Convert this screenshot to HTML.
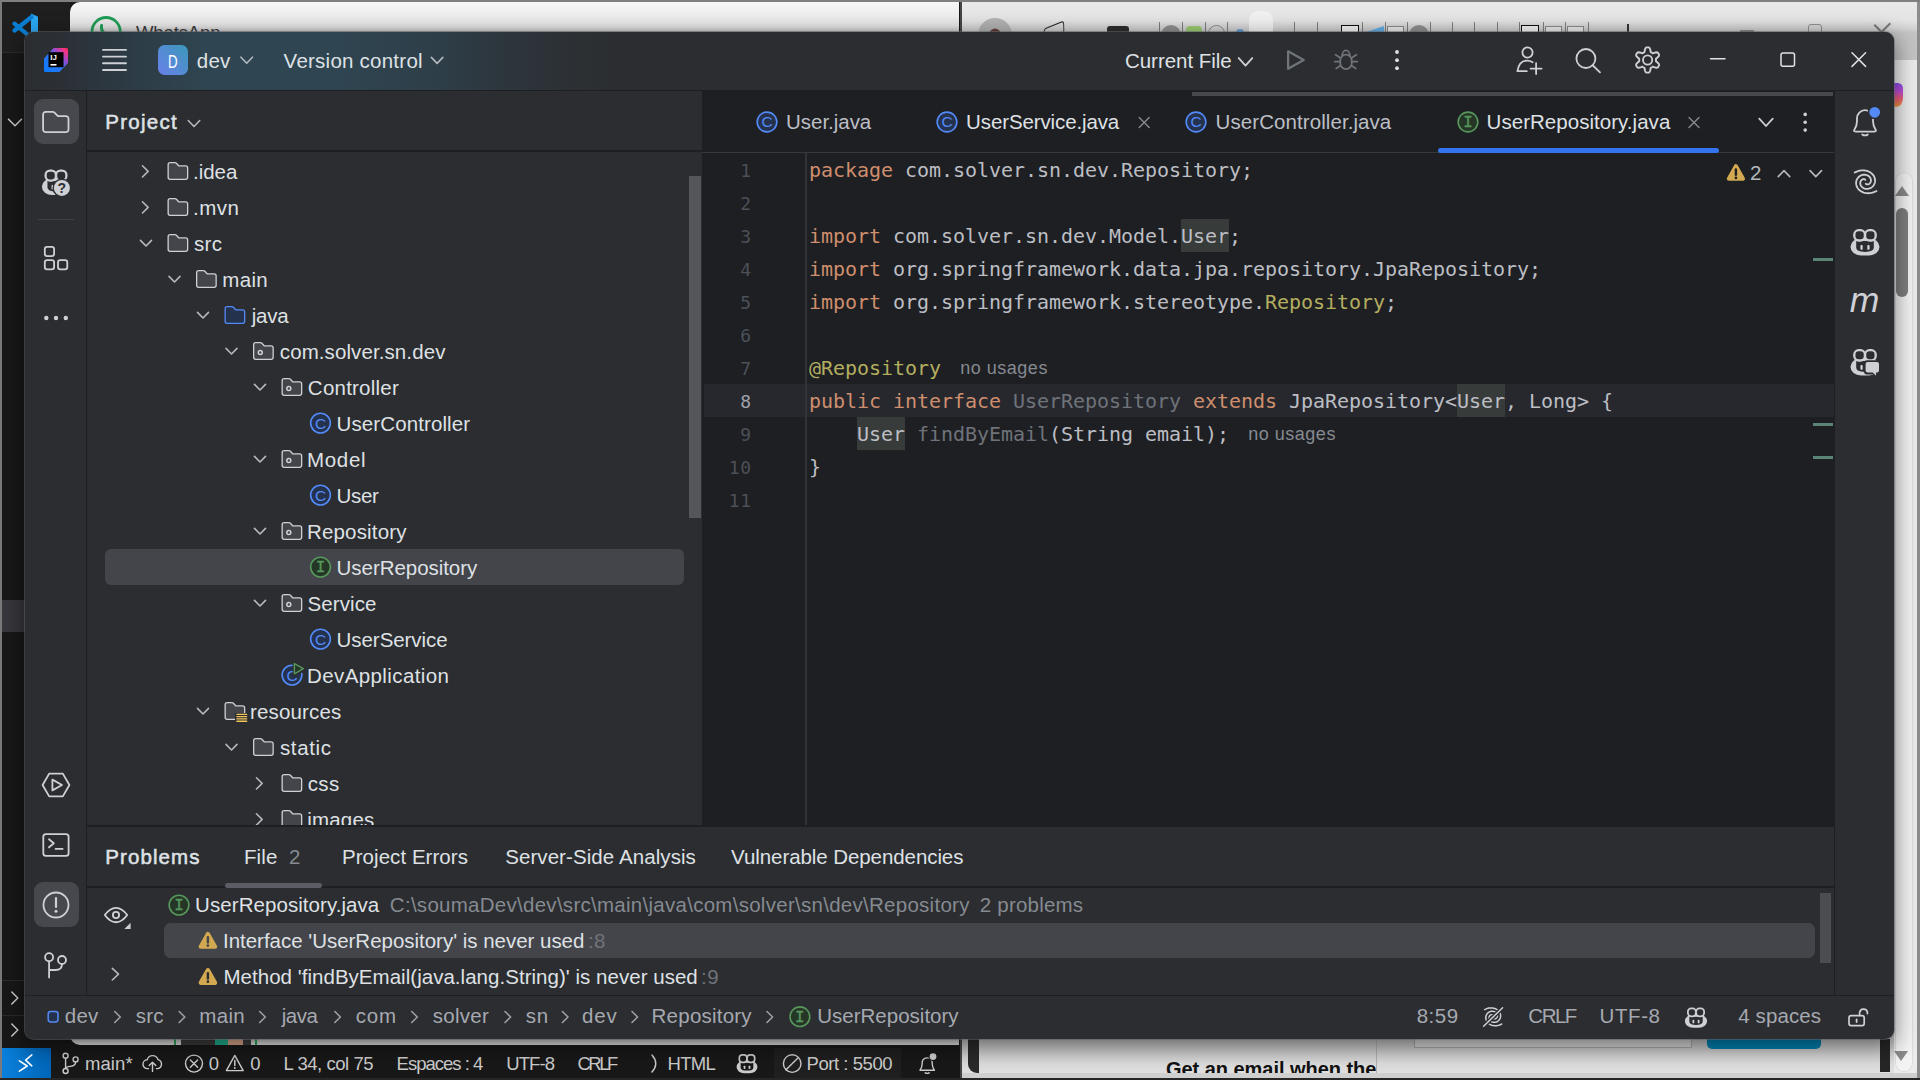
<!DOCTYPE html>
<html lang="en"><head><meta charset="utf-8"><title>dev – UserRepository.java</title>
<style>
html,body{margin:0;padding:0;background:#181818;overflow:hidden}
#root{position:relative;width:1920px;height:1080px;overflow:hidden;background:#181818;font-family:"Liberation Sans", sans-serif}
#root div,#root svg,#root span.t{position:absolute;display:block}
#root span.t{white-space:pre;height:30px}
</style></head><body><div id="root">
<div style="left:0px;top:0px;width:1920px;height:1080px;background:#181818;"></div>
<div style="left:2px;top:2px;width:68px;height:50px;background:#1f1f1f;"></div>
<div style="left:2px;top:52px;width:68px;height:1px;background:#2b2b2b;"></div>
<div style="left:2px;top:600px;width:24px;height:32px;background:#37373d;"></div>
<div style="left:2px;top:980px;width:24px;height:1px;background:#2b2b2b;"></div>
<div style="left:2px;top:1015px;width:24px;height:1px;background:#2b2b2b;"></div>
<div style="left:70px;top:2px;width:889px;height:1043px;border-radius:10px 0 0 10px;background:linear-gradient(180deg,#f7f7f7 0,#efefef 12px,#e6e6e6 24px,#d2d2d2 28px,#b8b8b8 31px,#bdbdbd 1036px,#e4e4e4 1043px)"></div>
<div style="left:962px;top:2px;width:958px;height:1076px;background:linear-gradient(180deg,#e9e9e9 0,#e4e4e4 18px,#d2d2d2 27px,#c4c4c4 31px,#c0c0c0 1038px,#c9c9c9 1046px,#dcdcdc 1062px,#e2e2e2 1076px)"></div>
<div style="left:959.5px;top:2px;width:2.5px;height:1076px;background:#454545;"></div>
<div style="left:1249px;top:11px;width:24px;height:24px;border-radius:9px 9px 0 0;background:#f1f1f1"></div>
<div style="left:978px;top:18px;width:34px;height:34px;border-radius:50%;background:radial-gradient(ellipse 8px 11px at 50% 62%,#5e3b31 0,#5e3b31 88%,#b2b2b2 100%)"></div>
<div style="left:1107px;top:26px;width:22px;height:8px;background:#2d2d2d;border-radius:3px 3px 0 0"></div>
<div style="left:1043px;top:25px;width:22px;height:12px;border:1.6px solid #333;border-radius:3px;transform:rotate(-22deg) skewX(-20deg);box-sizing:border-box"></div>
<div style="left:1159px;top:22px;width:1px;height:10px;background:#7d7d7d;"></div>
<div style="left:1182px;top:22px;width:1px;height:10px;background:#7d7d7d;"></div>
<div style="left:1205px;top:22px;width:1px;height:10px;background:#7d7d7d;"></div>
<div style="left:1227px;top:22px;width:1px;height:10px;background:#7d7d7d;"></div>
<div style="left:1294px;top:22px;width:1px;height:10px;background:#7d7d7d;"></div>
<div style="left:1317px;top:22px;width:1px;height:10px;background:#7d7d7d;"></div>
<div style="left:1362px;top:22px;width:1px;height:10px;background:#7d7d7d;"></div>
<div style="left:1385px;top:22px;width:1px;height:10px;background:#7d7d7d;"></div>
<div style="left:1407px;top:22px;width:1px;height:10px;background:#7d7d7d;"></div>
<div style="left:1430px;top:22px;width:1px;height:10px;background:#7d7d7d;"></div>
<div style="left:1452px;top:22px;width:1px;height:10px;background:#7d7d7d;"></div>
<div style="left:1474px;top:22px;width:1px;height:10px;background:#7d7d7d;"></div>
<div style="left:1497px;top:22px;width:1px;height:10px;background:#7d7d7d;"></div>
<div style="left:1519px;top:22px;width:1px;height:10px;background:#7d7d7d;"></div>
<div style="left:1543px;top:22px;width:1px;height:10px;background:#7d7d7d;"></div>
<div style="left:1565px;top:22px;width:1px;height:10px;background:#7d7d7d;"></div>
<div style="left:1588px;top:22px;width:1px;height:10px;background:#7d7d7d;"></div>
<div style="left:1161px;top:25px;width:20px;height:20px;border-radius:50%;background:#8f8f8f"></div>
<div style="left:1186px;top:26px;width:16px;height:8px;background:#9ccc72;border-radius:4px 4px 0 0"></div>
<div style="left:1208px;top:25px;width:17px;height:17px;border-radius:50%;border:1.5px solid #8a8a8a;box-sizing:border-box"></div>
<div style="left:1236px;top:29px;width:8px;height:8px;border-radius:50%;background:#5b9bd8"></div>
<div style="left:1409px;top:25px;width:20px;height:20px;border-radius:50%;background:#8f8f8f"></div>
<div style="left:1341px;top:25px;width:18px;height:8px;background:#f4f4f4;border:1.5px solid #111;box-sizing:border-box"></div>
<div style="left:1521px;top:25px;width:18px;height:8px;background:#f4f4f4;border:1.5px solid #111;box-sizing:border-box"></div>
<div style="left:1387px;top:26px;width:17px;height:7px;background:#e9e9e9;border:1px solid #8a8a8a;box-sizing:border-box"></div>
<div style="left:1545px;top:26px;width:17px;height:7px;background:#e9e9e9;border:1px solid #8a8a8a;box-sizing:border-box"></div>
<div style="left:1567px;top:26px;width:17px;height:7px;background:#e9e9e9;border:1px solid #8a8a8a;box-sizing:border-box"></div>
<div style="left:1363px;top:26px;width:0;height:0;border-left:21px solid transparent;border-bottom:7px solid #62aee8"></div>
<div style="left:1627px;top:24px;width:1.5px;height:8px;background:#333;"></div>
<div style="left:1740px;top:30px;width:14px;height:2px;background:#8a8a8a;"></div>
<div style="left:1808px;top:24px;width:14px;height:12px;background:transparent;border:1.5px solid #8f8f8f;border-radius:3px;box-sizing:border-box"></div>
<div style="left:1875px;top:24px;width:20px;height:1.5px;background:#777;transform:rotate(45deg);transform-origin:0 0"></div>
<div style="left:1891px;top:24px;width:20px;height:1.5px;background:#777;transform:rotate(135deg);transform-origin:0 0"></div>
<div style="left:1894px;top:60px;width:23px;height:1018px;background:#ebebeb;"></div>
<div style="left:1892px;top:83px;width:11px;height:24px;border-radius:3px 9px 11px 8px / 3px 9px 16px 10px;background:linear-gradient(180deg,#8a4df0 0,#c04fd8 35%,#f0607a 65%,#f59a3a 100%)"></div>
<div style="left:1895px;top:172px;width:18px;height:900px;border-radius:9px;background:#f3f3f3;box-shadow:inset 0 0 0 1px #dcdcdc"></div>
<div style="left:1895px;top:186px;width:0;height:0;border-left:7px solid transparent;border-right:7px solid transparent;border-bottom:10px solid #8a8a8a"></div>
<div style="left:1896px;top:208px;width:12px;height:89px;border-radius:6px;background:#7f7f7f"></div>
<div style="left:1894px;top:1051px;width:0;height:0;border-left:7.5px solid transparent;border-right:7.5px solid transparent;border-top:10px solid #8a8a8a"></div>
<div style="left:1917px;top:2px;width:3px;height:1076px;background:#8c8c8c;"></div>
<div style="left:1414px;top:1030px;width:278px;height:18px;background:#d4d4d4;border:1px solid #a6a6a6;box-sizing:border-box"></div>
<div style="left:1707px;top:1030px;width:114px;height:19px;background:#007fae;border-radius:0 0 5px 5px"></div>
<div style="left:1376px;top:1039px;width:1px;height:34px;background:#b0b0b0;"></div>
<div style="left:1880px;top:1039px;width:10px;height:33px;background:#262626;"></div>
<div style="left:968px;top:1030px;width:11px;height:43px;border-radius:0 0 0 9px;background:#2a2a2a"></div>
<div style="left:962px;top:1073px;width:955px;height:5px;background:#cfcfcf;"></div>
<div style="left:181px;top:1039px;width:70px;height:6px;background:#3b3b3b;"></div>
<div style="left:174px;top:1039px;width:2px;height:6px;background:#2ea35a;"></div>
<div style="left:255px;top:1039px;width:2px;height:6px;background:#2ea35a;"></div>
<div style="left:215px;top:1039px;width:13px;height:6px;background:#1fae8f;"></div>
<div style="left:228px;top:1039px;width:15px;height:6px;background:#d9a48a;"></div>
<div style="left:2px;top:1048px;width:957px;height:30px;background:#181818;"></div>
<div style="left:2px;top:1048px;width:49px;height:30px;background:linear-gradient(90deg,#0a80dc,#0066b8);"></div>
<div style="left:774px;top:1048px;width:127px;height:30px;background:#1f1f1f;"></div>
<div style="left:0px;top:0px;width:1920px;height:2px;background:#808080;"></div>
<div style="left:0px;top:0px;width:2px;height:1080px;background:#7a7a7a;"></div>
<div style="left:0px;top:1078px;width:1920px;height:2px;background:#262626;"></div>
<svg style="left:0;top:0" width="1920" height="1080" viewBox="0 0 1920 1080" fill="none"><path d="M31,13.5 L38,16.8 V45 L31,48 Z" fill="#2aa8f2"/><path d="M31.5,17 L14.5,30.5 M14.5,23.6 L31.5,38" stroke="#0b7fd4" stroke-width="4.2" fill="none" stroke-linecap="round" stroke-linejoin="round" /><path d="M8.5,119.25 L15,125.75 L21.5,119.25" stroke="#cccccc" stroke-width="1.6" fill="none" stroke-linecap="round" stroke-linejoin="round" /><path d="M11.8,992.0 L17.8,998 L11.8,1004.0" stroke="#cccccc" stroke-width="1.6" fill="none" stroke-linecap="round" stroke-linejoin="round" /><path d="M11.8,1024.0 L17.8,1030 L11.8,1036.0" stroke="#cccccc" stroke-width="1.6" fill="none" stroke-linecap="round" stroke-linejoin="round" /><circle cx="106.1" cy="31.6" r="14.1" stroke="#1f9d55" stroke-width="2.8" fill="none"/><path d="M101.6,25.5 q-1,5 3.4,8.5" stroke="#1f9d55" stroke-width="3" fill="none" stroke-linecap="round" stroke-linejoin="round" /><path d="M19.4,1060.8 L27.2,1066 L19.4,1071.2 M31.8,1054.8 L25.6,1060.2 L31.8,1065.8" stroke="#ffffff" stroke-width="1.6" fill="none" stroke-linecap="round" stroke-linejoin="round" /><circle cx="65.6" cy="1055.8" r="2.5" stroke="#cccccc" stroke-width="1.4" fill="none"/><circle cx="65.6" cy="1071" r="2.5" stroke="#cccccc" stroke-width="1.4" fill="none"/><circle cx="75.6" cy="1059.4" r="2.5" stroke="#cccccc" stroke-width="1.4" fill="none"/><path d="M65.6,1058.4 V1068.4 M75.6,1062 Q75.6,1066 70.5,1066.4 Q65.8,1066.8 65.6,1068.4" stroke="#cccccc" stroke-width="1.4" fill="none" stroke-linecap="round" stroke-linejoin="round" /><path d="M148.6,1068.6 H147.6 A4.4,4.4 0 0 1 147.2,1059.8 A5.6,5.6 0 0 1 158,1059.6 A4.6,4.6 0 0 1 157.6,1068.6 H156.4" stroke="#cccccc" stroke-width="1.4" fill="none" stroke-linecap="round" stroke-linejoin="round" /><path d="M152.5,1071.4 V1062.4 M149.2,1065.4 L152.5,1062.2 L155.8,1065.4" stroke="#cccccc" stroke-width="1.4" fill="none" stroke-linecap="round" stroke-linejoin="round" /><circle cx="194" cy="1063.6" r="8.5" stroke="#cccccc" stroke-width="1.4" fill="none"/><path d="M190.4,1060 L197.6,1067.2 M197.6,1060 L190.4,1067.2" stroke="#cccccc" stroke-width="1.4" fill="none" stroke-linecap="round" stroke-linejoin="round" /><path d="M234.8,1055.4 L243.2,1070.6 H226.4 Z" stroke="#cccccc" stroke-width="1.4" fill="none" stroke-linecap="round" stroke-linejoin="round" /><path d="M234.8,1060.6 V1065.6" stroke="#cccccc" stroke-width="1.5" fill="none" stroke-linecap="round" stroke-linejoin="round" /><circle cx="234.8" cy="1068" r="0.9" stroke="none" stroke-width="0" fill="#cccccc"/><path d="M652,1055 Q659.5,1063.5 652,1072" stroke="#cccccc" stroke-width="1.5" fill="none" stroke-linecap="round" stroke-linejoin="round" /><rect x="736.56" y="1060.78" width="20.88" height="12.38" rx="7.56" ry="6.05" fill="#cccccc"/><path d="M740.66,1062.72 h12.67 v4.68 q0,3.17 -6.34,3.17 q-6.34,0 -6.34,-3.17 Z" fill="#181818"/><rect x="739.3" y="1054.94" width="7.63" height="7.42" rx="3.17" fill="#181818" stroke="#cccccc" stroke-width="1.66"/><rect x="747.07" y="1054.94" width="7.63" height="7.42" rx="3.17" fill="#181818" stroke="#cccccc" stroke-width="1.66"/><rect x="743.69" y="1065.6699999999998" width="1.66" height="3.31" rx="0.58" fill="#cccccc"/><rect x="748.66" y="1065.6699999999998" width="1.66" height="3.31" rx="0.58" fill="#cccccc"/><circle cx="792.2" cy="1063.6" r="8.8" stroke="#cccccc" stroke-width="1.4" fill="none"/><path d="M786,1069.8 L798.4,1057.4" stroke="#cccccc" stroke-width="1.4" fill="none" stroke-linecap="round" stroke-linejoin="round" /><path d="M920,1070.2 H934.4 Q932.2,1067.4 932.2,1063.6 V1062 A5.1,5.1 0 0 0 922.2,1062 V1063.6 Q922.2,1067.4 920,1070.2 Z" stroke="#cccccc" stroke-width="1.4" fill="none" stroke-linecap="round" stroke-linejoin="round" /><path d="M925.2,1072.8 Q927.2,1074 929.2,1072.8" stroke="#cccccc" stroke-width="1.4" fill="none" stroke-linecap="round" stroke-linejoin="round" /><circle cx="933" cy="1056.6" r="4.6" stroke="none" stroke-width="0" fill="#181818"/><circle cx="933" cy="1056.6" r="3.4" stroke="none" stroke-width="0" fill="#cccccc"/></svg>
<span class="t" style='left:84.90px;top:1048.50px;font:400 18.5px/30px "Liberation Sans", sans-serif;color:#cccccc;letter-spacing:0.113px;'>main*</span>
<span class="t" style='left:208.85px;top:1048.50px;font:400 18.5px/30px "Liberation Sans", sans-serif;color:#cccccc;'>0</span>
<span class="t" style='left:250.36px;top:1048.50px;font:400 18.5px/30px "Liberation Sans", sans-serif;color:#cccccc;'>0</span>
<span class="t" style='left:283.59px;top:1048.50px;font:400 18.5px/30px "Liberation Sans", sans-serif;color:#cccccc;letter-spacing:-0.450px;'>L 34, col 75</span>
<span class="t" style='left:396.59px;top:1048.50px;font:400 18.5px/30px "Liberation Sans", sans-serif;color:#cccccc;letter-spacing:-0.997px;'>Espaces : 4</span>
<span class="t" style='left:506.27px;top:1048.50px;font:400 18.5px/30px "Liberation Sans", sans-serif;color:#cccccc;letter-spacing:-0.919px;'>UTF-8</span>
<span class="t" style='left:577.52px;top:1048.50px;font:400 18.5px/30px "Liberation Sans", sans-serif;color:#cccccc;letter-spacing:-2.531px;'>CRLF</span>
<span class="t" style='left:667.59px;top:1048.50px;font:400 18.5px/30px "Liberation Sans", sans-serif;color:#cccccc;letter-spacing:-0.684px;'>HTML</span>
<span class="t" style='left:806.59px;top:1048.50px;font:400 18.5px/30px "Liberation Sans", sans-serif;color:#cccccc;letter-spacing:-0.456px;'>Port : 5500</span>
<span class="t" style='left:135.98px;top:17.50px;font:400 18.5px/30px "Liberation Sans", sans-serif;color:#3a3a3a;letter-spacing:-0.121px;'>WhatsApp</span>
<span class="t" style='left:1166.00px;top:1054.00px;font:700 20px/30px "Liberation Sans", sans-serif;color:#111111;letter-spacing:-0.037px;clip-path:inset(0 0 11.00px 0);'>Get an email when the</span>
<div id="ide" style="left:25px;top:32px;width:1869px;height:1007px;border-radius:9px;background:#2b2d30;box-shadow:0 0 0 1px rgba(96,99,105,.55),0 6px 22px 2px rgba(0,0,0,.45)"></div>
<div style="left:25px;top:32px;width:1869px;height:58px;border-radius:9px 9px 0 0;background:linear-gradient(90deg,#2b2d30 0,#2b3036 40px,#2d3c46 110px,#2f4652 190px,#2f4652 300px,#2e3e48 415px,#2d363d 475px,#2c3135 535px,#2b2d30 600px)"></div>
<div style="left:25px;top:90px;width:1869px;height:1px;background:#1e1f22;"></div>
<div style="left:86px;top:91px;width:1px;height:904px;background:#1e1f22;"></div>
<div style="left:33.5px;top:99px;width:45px;height:45px;background:#46484d;border-radius:9px"></div>
<div style="left:33.5px;top:882px;width:45px;height:45px;background:#46484d;border-radius:9px"></div>
<div style="left:38px;top:219px;width:36px;height:1px;background:#3f4146;"></div>
<div style="left:87px;top:150px;width:616px;height:2px;background:#1e1f22;"></div>
<div style="left:105px;top:549px;width:579px;height:36px;background:#43454a;border-radius:6px"></div>
<div style="left:689px;top:176px;width:12px;height:342px;background:#545659;"></div>
<div style="left:702px;top:91px;width:1132px;height:734px;background:#1e1f22;"></div>
<div style="left:1192px;top:92px;width:641px;height:4px;background:#46484c;"></div>
<div style="left:702px;top:151.6px;width:1132px;height:1.9px;background:#36383c;"></div>
<div style="left:1438px;top:147.6px;width:281px;height:5px;background:#3574f0;border-radius:2.5px"></div>
<div style="left:704px;top:384px;width:1130px;height:33px;background:#26282e;"></div>
<div style="left:805.2px;top:153px;width:1.8px;height:672px;background:#303337;"></div>
<div style="left:1181px;top:219px;width:48px;height:33px;background:#373b39;"></div>
<div style="left:1457px;top:384px;width:48px;height:33px;background:#373b39;"></div>
<div style="left:857px;top:417px;width:48px;height:33px;background:#373b39;"></div>
<div style="left:1813px;top:258px;width:20px;height:3px;background:#5a8576;"></div>
<div style="left:1813px;top:423px;width:20px;height:3px;background:#5a8576;"></div>
<div style="left:1813px;top:456px;width:20px;height:3px;background:#5a8576;"></div>
<div style="left:1834px;top:91px;width:1px;height:904px;background:#1e1f22;"></div>
<div style="left:87px;top:825px;width:1747px;height:2px;background:#1e1f22;"></div>
<div style="left:87px;top:886px;width:1747px;height:2px;background:#1e1f22;"></div>
<div style="left:225px;top:883px;width:97px;height:5px;background:#5a5d63;border-radius:2.5px"></div>
<div style="left:164px;top:922.7px;width:1651px;height:35.8px;background:#43454a;border-radius:6.5px"></div>
<div style="left:1820px;top:893px;width:11px;height:70px;background:#4b4d51;"></div>
<div style="left:25px;top:995px;width:1869px;height:1px;background:#1e1f22;"></div>
<svg style="left:0;top:0" width="1920" height="1080" viewBox="0 0 1920 1080" fill="none"><defs><linearGradient id="ijg" x1="0" y1="1" x2="1" y2="0"><stop offset="0" stop-color="#087cfa"/><stop offset=".48" stop-color="#2f74f0"/><stop offset=".66" stop-color="#8a4fd6"/><stop offset=".86" stop-color="#f0358a"/><stop offset="1" stop-color="#fe2857"/></linearGradient><linearGradient id="dg" x1="0" y1="1" x2="1" y2="0"><stop offset="0" stop-color="#6a80ea"/><stop offset="1" stop-color="#3a98ba"/></linearGradient></defs><path d="M53.5,48 H66.5 Q68,48 68,49.5 V63 L59.5,72 H45.5 Q44,72 44,70.5 V58.5 Z" fill="url(#ijg)"/><rect x="48.5" y="52.2" width="15" height="15" fill="#000"/><text x="50.3" y="59.6" font-family="Liberation Sans, sans-serif" font-weight="700" font-size="7" fill="#fff" textLength="6.6" lengthAdjust="spacingAndGlyphs">IJ</text><rect x="50.5" y="64" width="6" height="1.6" fill="#fff"/><path d="M103,49.9 H126" stroke="#ced0d6" stroke-width="1.9" fill="none" stroke-linecap="round" stroke-linejoin="round" /><path d="M103,56.6 H126" stroke="#ced0d6" stroke-width="1.9" fill="none" stroke-linecap="round" stroke-linejoin="round" /><path d="M103,63.3 H126" stroke="#ced0d6" stroke-width="1.9" fill="none" stroke-linecap="round" stroke-linejoin="round" /><path d="M103,70 H126" stroke="#ced0d6" stroke-width="1.9" fill="none" stroke-linecap="round" stroke-linejoin="round" /><rect x="158" y="45" width="30" height="30" rx="6.5" fill="url(#dg)"/><path d="M240.95,57.2 L246.7,63.2 L252.45,57.2" stroke="#b4b8bf" stroke-width="1.6" fill="none" stroke-linecap="round" stroke-linejoin="round" /><path d="M431.35,57.4 L437.1,63.4 L442.85,57.4" stroke="#b4b8bf" stroke-width="1.6" fill="none" stroke-linecap="round" stroke-linejoin="round" /><path d="M1238.75,58.05 L1245.5,65.55 L1252.25,58.05" stroke="#ced0d6" stroke-width="1.8" fill="none" stroke-linecap="round" stroke-linejoin="round" /><path d="M1288.1,51.3 L1303.7,60 L1288.1,68.7 Z" stroke="#6f737a" stroke-width="2.3" fill="none" stroke-linecap="round" stroke-linejoin="round" /><path d="M1340.3,60.3 a5.7,5.7 0 0 1 11.4,0 v3.1 a5.7,5.7 0 0 1 -11.4,0 Z" stroke="#6f737a" stroke-width="1.8" fill="none" stroke-linecap="round" stroke-linejoin="round" /><path d="M1342.2,55.6 a3.8,5.2 0 0 1 7.6,0 M1335.6,54.8 l4.6,3 M1356.4,54.8 l-4.6,3 M1334.8,61.7 h5.2 M1357.2,61.7 h-5.2 M1336.2,68.4 l4.4,-2.8 M1355.8,68.4 l-4.4,-2.8" stroke="#6f737a" stroke-width="1.8" fill="none" stroke-linecap="round" stroke-linejoin="round" /><circle cx="1397" cy="52" r="1.9" stroke="none" stroke-width="0" fill="#dfe1e5"/><circle cx="1397" cy="60.2" r="1.9" stroke="none" stroke-width="0" fill="#dfe1e5"/><circle cx="1397" cy="68.2" r="1.9" stroke="none" stroke-width="0" fill="#dfe1e5"/><circle cx="1527.5" cy="52.5" r="5.1" stroke="#ced0d6" stroke-width="1.8" fill="none"/><path d="M1532.6,62.2 Q1530.2,60.6 1527,60.6 C1521,60.6 1518.4,65 1517.4,71.2 H1526.8" stroke="#ced0d6" stroke-width="1.8" fill="none" stroke-linecap="round" stroke-linejoin="round" /><path d="M1530.6,68.6 H1541.6 M1536.1,63.1 V74.1" stroke="#ced0d6" stroke-width="1.8" fill="none" stroke-linecap="round" stroke-linejoin="round" /><circle cx="1585.9" cy="58.5" r="9.5" stroke="#ced0d6" stroke-width="1.8" fill="none"/><path d="M1592.9,65.5 L1600,72.4" stroke="#ced0d6" stroke-width="1.8" fill="none" stroke-linecap="round" stroke-linejoin="round" /><path d="M1656.00,60.00 L1655.98,60.59 L1655.92,61.17 L1656.92,61.98 L1658.01,62.98 L1658.95,64.13 L1659.11,65.12 L1658.73,65.92 L1658.29,66.68 L1657.79,67.41 L1656.85,67.76 L1655.39,67.52 L1653.97,67.08 L1652.77,66.62 L1652.30,66.96 L1651.80,67.27 L1651.28,67.55 L1650.75,67.79 L1650.54,69.06 L1650.22,70.51 L1649.70,71.89 L1648.92,72.53 L1648.04,72.59 L1647.16,72.59 L1646.28,72.53 L1645.50,71.89 L1644.98,70.51 L1644.66,69.06 L1644.45,67.79 L1643.92,67.55 L1643.40,67.27 L1642.90,66.96 L1642.43,66.62 L1641.23,67.08 L1639.81,67.52 L1638.35,67.76 L1637.41,67.41 L1636.91,66.68 L1636.47,65.92 L1636.09,65.12 L1636.25,64.13 L1637.19,62.98 L1638.28,61.98 L1639.28,61.17 L1639.22,60.59 L1639.20,60.00 L1639.22,59.41 L1639.28,58.83 L1638.28,58.02 L1637.19,57.02 L1636.25,55.87 L1636.09,54.88 L1636.47,54.08 L1636.91,53.32 L1637.41,52.59 L1638.35,52.24 L1639.81,52.48 L1641.23,52.92 L1642.43,53.38 L1642.90,53.04 L1643.40,52.73 L1643.92,52.45 L1644.45,52.21 L1644.66,50.94 L1644.98,49.49 L1645.50,48.11 L1646.28,47.47 L1647.16,47.41 L1648.04,47.41 L1648.92,47.47 L1649.70,48.11 L1650.22,49.49 L1650.54,50.94 L1650.75,52.21 L1651.28,52.45 L1651.80,52.73 L1652.30,53.04 L1652.77,53.38 L1653.97,52.92 L1655.39,52.48 L1656.85,52.24 L1657.79,52.59 L1658.29,53.32 L1658.73,54.08 L1659.11,54.88 L1658.95,55.87 L1658.01,57.02 L1656.92,58.02 L1655.92,58.83 L1655.98,59.41 Z" stroke="#ced0d6" stroke-width="1.9" fill="none" stroke-linecap="round" stroke-linejoin="round" /><circle cx="1647.6" cy="60" r="4.6" stroke="#ced0d6" stroke-width="1.8" fill="none"/><path d="M1710.5,58.7 H1725" stroke="#dfe1e5" stroke-width="1.5" fill="none" stroke-linecap="round" stroke-linejoin="round" /><rect x="1781" y="53" width="13.5" height="13.2" rx="2" stroke="#dfe1e5" stroke-width="1.5" fill="none"/><path d="M1852,52.8 L1865.6,66.4 M1865.6,52.8 L1852,66.4" stroke="#dfe1e5" stroke-width="1.5" fill="none" stroke-linecap="round" stroke-linejoin="round" /><path d="M43.1,114.4 a2.6,2.6 0 0 1 2.6,-2.6 H52.7 q0.9,0 1.5,0.6 L57.900000000000006,116.20000000000002 H65.9 a2.6,2.6 0 0 1 2.6,2.6 V129.6 a2.6,2.6 0 0 1 -2.6,2.6 H45.7 a2.6,2.6 0 0 1 -2.6,-2.6 Z" stroke="#ced0d6" stroke-width="1.8" fill="none" stroke-linecap="round" stroke-linejoin="round" /><rect x="41.94" y="178.43" width="28.13" height="16.68" rx="10.19" ry="8.15" fill="#ced0d6"/><path d="M47.46,181.04 h17.07 v6.3 q0,4.27 -8.54,4.27 q-8.54,0 -8.54,-4.27 Z" fill="#2b2d30"/><rect x="45.62" y="170.57" width="10.28" height="9.99" rx="4.27" fill="#2b2d30" stroke="#ced0d6" stroke-width="2.23"/><rect x="56.1" y="170.57" width="10.28" height="9.99" rx="4.27" fill="#2b2d30" stroke="#ced0d6" stroke-width="2.23"/><rect x="51.54" y="185.02" width="2.23" height="4.46" rx="0.78" fill="#ced0d6"/><rect x="58.23" y="185.02" width="2.23" height="4.46" rx="0.78" fill="#ced0d6"/><circle cx="61.9" cy="187.9" r="9.4" stroke="none" stroke-width="0" fill="#2b2d30"/><circle cx="61.9" cy="187.9" r="8" stroke="none" stroke-width="0" fill="#ced0d6"/><text x="61.9" y="193" text-anchor="middle" font-family="Liberation Sans, sans-serif" font-weight="700" font-size="14" fill="#2b2d30">?</text><rect x="44.8" y="246.8" width="9.3" height="9.3" rx="2.3" stroke="#ced0d6" stroke-width="1.8" fill="none"/><rect x="44.8" y="260.1" width="9.3" height="9.3" rx="2.3" stroke="#ced0d6" stroke-width="1.8" fill="none"/><rect x="58" y="260.1" width="9.3" height="9.3" rx="2.3" stroke="#ced0d6" stroke-width="1.8" fill="none"/><circle cx="46.3" cy="318" r="2.2" stroke="none" stroke-width="0" fill="#ced0d6"/><circle cx="56" cy="318" r="2.2" stroke="none" stroke-width="0" fill="#ced0d6"/><circle cx="65.8" cy="318" r="2.2" stroke="none" stroke-width="0" fill="#ced0d6"/><path d="M42.6,785 L49.2,773.6 H62.8 L69.4,785 L62.8,796.4 H49.2 Z" stroke="#ced0d6" stroke-width="1.8" fill="none" stroke-linecap="round" stroke-linejoin="round" /><path d="M52.4,779.6 V790.4 L62,785 Z" stroke="#ced0d6" stroke-width="1.8" fill="none" stroke-linecap="round" stroke-linejoin="round" /><rect x="43.3" y="834.2" width="25.3" height="21.6" rx="2.6" stroke="#ced0d6" stroke-width="1.8" fill="none"/><path d="M49,839.3 L53.8,843.3 L49,847.3 M55.6,848.9 H62.6" stroke="#ced0d6" stroke-width="1.8" fill="none" stroke-linecap="round" stroke-linejoin="round" /><circle cx="56" cy="905" r="12.5" stroke="#ced0d6" stroke-width="1.8" fill="none"/><path d="M56,898 V907" stroke="#ced0d6" stroke-width="2.2" fill="none" stroke-linecap="round" stroke-linejoin="round" /><circle cx="56" cy="911.2" r="1.5" stroke="none" stroke-width="0" fill="#ced0d6"/><circle cx="49.1" cy="957.2" r="4" stroke="#ced0d6" stroke-width="1.8" fill="none"/><circle cx="62" cy="960" r="4" stroke="#ced0d6" stroke-width="1.8" fill="none"/><path d="M49.1,961.4 V977.6 M62,964.2 Q62,970 55.5,970 H49.4" stroke="#ced0d6" stroke-width="1.8" fill="none" stroke-linecap="round" stroke-linejoin="round" /><path d="M1855.6,131.6 H1874.4 Q1877,131.6 1875.4,129.2 Q1873,125.6 1873,121 V118.2 A8,8 0 0 0 1857,118.2 V121 Q1857,125.6 1854.6,129.2 Q1853,131.6 1855.6,131.6 Z" stroke="#ced0d6" stroke-width="1.8" fill="none" stroke-linecap="round" stroke-linejoin="round" /><path d="M1862.2,134.4 Q1865,136.4 1867.8,134.4" stroke="#ced0d6" stroke-width="1.8" fill="none" stroke-linecap="round" stroke-linejoin="round" /><circle cx="1874.7" cy="112.3" r="6.9" stroke="none" stroke-width="0" fill="#2b2d30"/><circle cx="1874.7" cy="112.3" r="5.4" stroke="none" stroke-width="0" fill="#548af7"/><path d="M1865.29,179.82 L1864.98,179.48 L1864.65,179.30 L1864.28,179.20 L1863.90,179.15 L1863.50,179.16 L1863.09,179.23 L1862.69,179.36 L1862.30,179.54 L1861.92,179.78 L1861.56,180.06 L1861.24,180.40 L1860.95,180.78 L1860.70,181.20 L1860.50,181.66 L1860.35,182.15 L1860.26,182.66 L1860.23,183.20 L1860.27,183.75 L1860.37,184.30 L1860.53,184.85 L1860.77,185.40 L1861.07,185.93 L1861.43,186.44 L1861.86,186.91 L1862.35,187.35 L1862.90,187.75 L1863.50,188.10 L1864.15,188.39 L1864.83,188.62 L1865.56,188.78 L1866.30,188.87 L1867.07,188.89 L1867.85,188.84 L1868.63,188.70 L1869.40,188.49 L1870.16,188.20 L1870.89,187.83 L1871.59,187.39 L1872.25,186.87 L1872.86,186.29 L1873.41,185.64 L1873.89,184.93 L1874.30,184.17 L1874.63,183.37 L1874.87,182.52 L1875.03,181.65 L1875.09,180.75 L1875.06,179.84 L1874.93,178.92 L1874.70,178.01 L1874.37,177.11 L1873.95,176.23 L1873.43,175.39 L1872.81,174.59 L1872.11,173.83 L1871.32,173.13 L1870.45,172.50 L1869.51,171.94 L1868.50,171.45 L1867.42,171.05 L1866.29,170.74 L1865.11,170.51 L1863.89,170.39 L1862.64,170.37 L1861.35,170.45 L1860.04,170.64 L1858.72,170.95 L1857.39,171.37 L1856.06,171.90 L1854.73,172.57 M1865.91,183.78 L1866.22,184.12 L1866.55,184.30 L1866.92,184.40 L1867.30,184.45 L1867.70,184.44 L1868.11,184.37 L1868.51,184.24 L1868.90,184.06 L1869.28,183.82 L1869.64,183.54 L1869.96,183.20 L1870.25,182.82 L1870.50,182.40 L1870.70,181.94 L1870.85,181.45 L1870.94,180.94 L1870.97,180.40 L1870.93,179.85 L1870.83,179.30 L1870.67,178.75 L1870.43,178.20 L1870.13,177.67 L1869.77,177.16 L1869.34,176.69 L1868.85,176.25 L1868.30,175.85 L1867.70,175.50 L1867.05,175.21 L1866.37,174.98 L1865.64,174.82 L1864.90,174.73 L1864.13,174.71 L1863.35,174.76 L1862.57,174.90 L1861.80,175.11 L1861.04,175.40 L1860.31,175.77 L1859.61,176.21 L1858.95,176.73 L1858.34,177.31 L1857.79,177.96 L1857.31,178.67 L1856.90,179.43 L1856.57,180.23 L1856.33,181.08 L1856.17,181.95 L1856.11,182.85 L1856.14,183.76 L1856.27,184.68 L1856.50,185.59 L1856.83,186.49 L1857.25,187.37 L1857.77,188.21 L1858.39,189.01 L1859.09,189.77 L1859.88,190.47 L1860.75,191.10 L1861.69,191.66 L1862.70,192.15 L1863.78,192.55 L1864.91,192.86 L1866.09,193.09 L1867.31,193.21 L1868.56,193.23 L1869.85,193.15 L1871.16,192.96 L1872.48,192.65 L1873.81,192.23 L1875.14,191.70 L1876.47,191.03" stroke="#ced0d6" stroke-width="1.8" fill="none" stroke-linecap="round" stroke-linejoin="round" /><rect x="1850.5" y="238.3" width="29.0" height="17.2" rx="10.5" ry="8.4" fill="#ced0d6"/><path d="M1856.2,241.0 h17.6 v6.5 q0,4.4 -8.8,4.4 q-8.8,0 -8.8,-4.4 Z" fill="#2b2d30"/><rect x="1854.3" y="230.2" width="10.6" height="10.3" rx="4.4" fill="#2b2d30" stroke="#ced0d6" stroke-width="2.3"/><rect x="1865.1" y="230.2" width="10.6" height="10.3" rx="4.4" fill="#2b2d30" stroke="#ced0d6" stroke-width="2.3"/><rect x="1860.4" y="245.1" width="2.3" height="4.6" rx="0.8" fill="#ced0d6"/><rect x="1867.3" y="245.1" width="2.3" height="4.6" rx="0.8" fill="#ced0d6"/><text x="1864.6" y="312.2" text-anchor="middle" font-family="Liberation Sans, sans-serif" font-style="italic" font-size="35.5" fill="#ced0d6">m</text><rect x="1850.5" y="358.3" width="29.0" height="17.2" rx="10.5" ry="8.4" fill="#ced0d6"/><path d="M1856.2,361.0 h17.6 v6.5 q0,4.4 -8.8,4.4 q-8.8,0 -8.8,-4.4 Z" fill="#2b2d30"/><rect x="1854.3" y="350.2" width="10.6" height="10.3" rx="4.4" fill="#2b2d30" stroke="#ced0d6" stroke-width="2.3"/><rect x="1865.1" y="350.2" width="10.6" height="10.3" rx="4.4" fill="#2b2d30" stroke="#ced0d6" stroke-width="2.3"/><rect x="1860.4" y="365.1" width="2.3" height="4.6" rx="0.8" fill="#ced0d6"/><rect x="1867.3" y="365.1" width="2.3" height="4.6" rx="0.8" fill="#ced0d6"/><path d="M1864,363.2 a3,3 0 0 1 3,-3 h10.4 a3,3 0 0 1 3,3 v8.2 a3,3 0 0 1 -3,3 h-0.4 l0.2,3.6 l-3.8,-3.6 h-6.4 a3,3 0 0 1 -3,-3 Z" fill="#2b2d30"/><path d="M1865.6,364 a2,2 0 0 1 2,-2 h9.4 a2,2 0 0 1 2,2 v6.6 a2,2 0 0 1 -2,2 h-1 l0.1,3.2 l-3.4,-3.2 h-5.1 a2,2 0 0 1 -2,-2 Z" fill="#ced0d6"/><path d="M188.25,120.5 L194,126.5 L199.75,120.5" stroke="#b4b8bf" stroke-width="1.6" fill="none" stroke-linecap="round" stroke-linejoin="round" /><g clip-path="url(#treeclip)"><defs><clipPath id="treeclip"><rect x="87" y="152" width="616" height="673"/></clipPath></defs><path d="M142.45000000000002,165.8 L148.15,171.4 L142.45000000000002,177.0" stroke="#b4b8bf" stroke-width="1.6" fill="none" stroke-linecap="round" stroke-linejoin="round" /><path d="M168.15,164.65 a2,2 0 0 1 2,-2 H174.9 q0.9,0 1.5,0.6 L178.9,165.95000000000002 H185.65 a2,2 0 0 1 2,2 V177.35 a2,2 0 0 1 -2,2 H170.15 a2,2 0 0 1 -2,-2 Z" stroke="#ced0d6" stroke-width="1.3" fill="#43454a" stroke-linecap="round" stroke-linejoin="round" /><path d="M142.45000000000002,201.8 L148.15,207.4 L142.45000000000002,213.0" stroke="#b4b8bf" stroke-width="1.6" fill="none" stroke-linecap="round" stroke-linejoin="round" /><path d="M168.15,200.65 a2,2 0 0 1 2,-2 H174.9 q0.9,0 1.5,0.6 L178.9,201.95000000000002 H185.65 a2,2 0 0 1 2,2 V213.35 a2,2 0 0 1 -2,2 H170.15 a2,2 0 0 1 -2,-2 Z" stroke="#ced0d6" stroke-width="1.3" fill="#43454a" stroke-linecap="round" stroke-linejoin="round" /><path d="M140.5,240.39999999999998 L146.0,246.0 L151.5,240.39999999999998" stroke="#b4b8bf" stroke-width="1.6" fill="none" stroke-linecap="round" stroke-linejoin="round" /><path d="M168.15,236.65 a2,2 0 0 1 2,-2 H174.9 q0.9,0 1.5,0.6 L178.9,237.95000000000002 H185.65 a2,2 0 0 1 2,2 V249.35 a2,2 0 0 1 -2,2 H170.15 a2,2 0 0 1 -2,-2 Z" stroke="#ced0d6" stroke-width="1.3" fill="#43454a" stroke-linecap="round" stroke-linejoin="round" /><path d="M169.0,276.4 L174.5,282.0 L180.0,276.4" stroke="#b4b8bf" stroke-width="1.6" fill="none" stroke-linecap="round" stroke-linejoin="round" /><path d="M196.65,272.65 a2,2 0 0 1 2,-2 H203.4 q0.9,0 1.5,0.6 L207.4,273.95 H214.15 a2,2 0 0 1 2,2 V285.35 a2,2 0 0 1 -2,2 H198.65 a2,2 0 0 1 -2,-2 Z" stroke="#ced0d6" stroke-width="1.3" fill="#43454a" stroke-linecap="round" stroke-linejoin="round" /><path d="M197.5,312.4 L203.0,318.0 L208.5,312.4" stroke="#b4b8bf" stroke-width="1.6" fill="none" stroke-linecap="round" stroke-linejoin="round" /><path d="M225.15,308.65 a2,2 0 0 1 2,-2 H231.9 q0.9,0 1.5,0.6 L235.9,309.95 H242.65 a2,2 0 0 1 2,2 V321.35 a2,2 0 0 1 -2,2 H227.15 a2,2 0 0 1 -2,-2 Z" stroke="#548af7" stroke-width="1.3" fill="#25324d" stroke-linecap="round" stroke-linejoin="round" /><path d="M226.0,348.4 L231.5,354.0 L237.0,348.4" stroke="#b4b8bf" stroke-width="1.6" fill="none" stroke-linecap="round" stroke-linejoin="round" /><path d="M253.65,344.65 a2,2 0 0 1 2,-2 H260.4 q0.9,0 1.5,0.6 L264.4,345.95 H271.15000000000003 a2,2 0 0 1 2,2 V357.35 a2,2 0 0 1 -2,2 H255.65 a2,2 0 0 1 -2,-2 Z" stroke="#ced0d6" stroke-width="1.3" fill="#43454a" stroke-linecap="round" stroke-linejoin="round" /><circle cx="260.3" cy="352.5" r="2.0" stroke="#ced0d6" stroke-width="1.5" fill="none"/><path d="M254.5,384.4 L260.0,390.0 L265.5,384.4" stroke="#b4b8bf" stroke-width="1.6" fill="none" stroke-linecap="round" stroke-linejoin="round" /><path d="M282.15,380.65 a2,2 0 0 1 2,-2 H288.9 q0.9,0 1.5,0.6 L292.9,381.95 H299.65000000000003 a2,2 0 0 1 2,2 V393.35 a2,2 0 0 1 -2,2 H284.15 a2,2 0 0 1 -2,-2 Z" stroke="#ced0d6" stroke-width="1.3" fill="#43454a" stroke-linecap="round" stroke-linejoin="round" /><circle cx="288.8" cy="388.5" r="2.0" stroke="#ced0d6" stroke-width="1.5" fill="none"/><circle cx="320.5" cy="423.1" r="9.85" stroke="#548af7" stroke-width="1.6" fill="#25324d"/><text x="320.5" y="428.5" text-anchor="middle" font-family="Liberation Sans, sans-serif" font-size="15.5" fill="#548af7">C</text><path d="M254.5,456.4 L260.0,462.0 L265.5,456.4" stroke="#b4b8bf" stroke-width="1.6" fill="none" stroke-linecap="round" stroke-linejoin="round" /><path d="M282.15,452.65 a2,2 0 0 1 2,-2 H288.9 q0.9,0 1.5,0.6 L292.9,453.95 H299.65000000000003 a2,2 0 0 1 2,2 V465.35 a2,2 0 0 1 -2,2 H284.15 a2,2 0 0 1 -2,-2 Z" stroke="#ced0d6" stroke-width="1.3" fill="#43454a" stroke-linecap="round" stroke-linejoin="round" /><circle cx="288.8" cy="460.5" r="2.0" stroke="#ced0d6" stroke-width="1.5" fill="none"/><circle cx="320.5" cy="495.1" r="9.85" stroke="#548af7" stroke-width="1.6" fill="#25324d"/><text x="320.5" y="500.5" text-anchor="middle" font-family="Liberation Sans, sans-serif" font-size="15.5" fill="#548af7">C</text><path d="M254.5,528.4000000000001 L260.0,534.0 L265.5,528.4000000000001" stroke="#b4b8bf" stroke-width="1.6" fill="none" stroke-linecap="round" stroke-linejoin="round" /><path d="M282.15,524.65 a2,2 0 0 1 2,-2 H288.9 q0.9,0 1.5,0.6 L292.9,525.9499999999999 H299.65000000000003 a2,2 0 0 1 2,2 V537.35 a2,2 0 0 1 -2,2 H284.15 a2,2 0 0 1 -2,-2 Z" stroke="#ced0d6" stroke-width="1.3" fill="#43454a" stroke-linecap="round" stroke-linejoin="round" /><circle cx="288.8" cy="532.5" r="2.0" stroke="#ced0d6" stroke-width="1.5" fill="none"/><circle cx="320.5" cy="567.1" r="9.85" stroke="#57965c" stroke-width="1.6" fill="#253627"/><text x="320.5" y="572.2" text-anchor="middle" font-family="Liberation Mono, monospace" font-size="16" fill="#57965c" stroke="#57965c" stroke-width="0.35">I</text><path d="M254.5,600.4000000000001 L260.0,606.0 L265.5,600.4000000000001" stroke="#b4b8bf" stroke-width="1.6" fill="none" stroke-linecap="round" stroke-linejoin="round" /><path d="M282.15,596.65 a2,2 0 0 1 2,-2 H288.9 q0.9,0 1.5,0.6 L292.9,597.9499999999999 H299.65000000000003 a2,2 0 0 1 2,2 V609.35 a2,2 0 0 1 -2,2 H284.15 a2,2 0 0 1 -2,-2 Z" stroke="#ced0d6" stroke-width="1.3" fill="#43454a" stroke-linecap="round" stroke-linejoin="round" /><circle cx="288.8" cy="604.5" r="2.0" stroke="#ced0d6" stroke-width="1.5" fill="none"/><circle cx="320.5" cy="639.1" r="9.85" stroke="#548af7" stroke-width="1.6" fill="#25324d"/><text x="320.5" y="644.5" text-anchor="middle" font-family="Liberation Sans, sans-serif" font-size="15.5" fill="#548af7">C</text><circle cx="292.0" cy="675.1" r="9.85" stroke="#548af7" stroke-width="1.6" fill="#25324d"/><text x="292.0" y="680.5" text-anchor="middle" font-family="Liberation Sans, sans-serif" font-size="15.5" fill="#548af7">C</text><path d="M294.4,662.4 V675 L305.1,668.7 Z" stroke="#2b2d30" stroke-width="3.4" fill="#2b2d30" stroke-linecap="round" stroke-linejoin="round" /><path d="M294.4,663.6 V673.8 L303.3,668.7 Z" stroke="#57965c" stroke-width="1.4" fill="#253627" stroke-linecap="round" stroke-linejoin="round" /><path d="M197.5,708.4000000000001 L203.0,714.0 L208.5,708.4000000000001" stroke="#b4b8bf" stroke-width="1.6" fill="none" stroke-linecap="round" stroke-linejoin="round" /><path d="M225.15,704.65 a2,2 0 0 1 2,-2 H231.9 q0.9,0 1.5,0.6 L235.9,705.9499999999999 H242.65 a2,2 0 0 1 2,2 V717.35 a2,2 0 0 1 -2,2 H227.15 a2,2 0 0 1 -2,-2 Z" stroke="#ced0d6" stroke-width="1.3" fill="#43454a" stroke-linecap="round" stroke-linejoin="round" /><rect x="235.1" y="713" width="12" height="9" fill="#2b2d30"/><path d="M236.9,714.3 H246.7" stroke="#f2c55c" stroke-width="1.35" fill="none" stroke-linecap="round" stroke-linejoin="round" /><path d="M236.9,716.5999999999999 H246.7" stroke="#f2c55c" stroke-width="1.35" fill="none" stroke-linecap="round" stroke-linejoin="round" /><path d="M236.9,718.9 H246.7" stroke="#f2c55c" stroke-width="1.35" fill="none" stroke-linecap="round" stroke-linejoin="round" /><path d="M236.9,721.1999999999999 H246.7" stroke="#f2c55c" stroke-width="1.35" fill="none" stroke-linecap="round" stroke-linejoin="round" /><path d="M226.0,744.4000000000001 L231.5,750.0 L237.0,744.4000000000001" stroke="#b4b8bf" stroke-width="1.6" fill="none" stroke-linecap="round" stroke-linejoin="round" /><path d="M253.65,740.65 a2,2 0 0 1 2,-2 H260.4 q0.9,0 1.5,0.6 L264.4,741.9499999999999 H271.15000000000003 a2,2 0 0 1 2,2 V753.35 a2,2 0 0 1 -2,2 H255.65 a2,2 0 0 1 -2,-2 Z" stroke="#ced0d6" stroke-width="1.3" fill="#43454a" stroke-linecap="round" stroke-linejoin="round" /><path d="M256.45,777.8 L262.15000000000003,783.4 L256.45,789.0" stroke="#b4b8bf" stroke-width="1.6" fill="none" stroke-linecap="round" stroke-linejoin="round" /><path d="M282.15,776.65 a2,2 0 0 1 2,-2 H288.9 q0.9,0 1.5,0.6 L292.9,777.9499999999999 H299.65000000000003 a2,2 0 0 1 2,2 V789.35 a2,2 0 0 1 -2,2 H284.15 a2,2 0 0 1 -2,-2 Z" stroke="#ced0d6" stroke-width="1.3" fill="#43454a" stroke-linecap="round" stroke-linejoin="round" /><path d="M256.45,813.8 L262.15000000000003,819.4 L256.45,825.0" stroke="#b4b8bf" stroke-width="1.6" fill="none" stroke-linecap="round" stroke-linejoin="round" /><path d="M282.15,812.65 a2,2 0 0 1 2,-2 H288.9 q0.9,0 1.5,0.6 L292.9,813.9499999999999 H299.65000000000003 a2,2 0 0 1 2,2 V825.35 a2,2 0 0 1 -2,2 H284.15 a2,2 0 0 1 -2,-2 Z" stroke="#ced0d6" stroke-width="1.3" fill="#43454a" stroke-linecap="round" stroke-linejoin="round" /></g><circle cx="767.0" cy="122.0" r="9.85" stroke="#548af7" stroke-width="1.6" fill="#25324d"/><text x="767.0" y="127.4" text-anchor="middle" font-family="Liberation Sans, sans-serif" font-size="15.5" fill="#548af7">C</text><circle cx="947.0" cy="122.0" r="9.85" stroke="#548af7" stroke-width="1.6" fill="#25324d"/><text x="947.0" y="127.4" text-anchor="middle" font-family="Liberation Sans, sans-serif" font-size="15.5" fill="#548af7">C</text><circle cx="1196.0" cy="122.0" r="9.85" stroke="#548af7" stroke-width="1.6" fill="#25324d"/><text x="1196.0" y="127.4" text-anchor="middle" font-family="Liberation Sans, sans-serif" font-size="15.5" fill="#548af7">C</text><circle cx="1468.0" cy="122.0" r="9.85" stroke="#57965c" stroke-width="1.6" fill="#253627"/><text x="1468.0" y="127.10000000000001" text-anchor="middle" font-family="Liberation Mono, monospace" font-size="16" fill="#57965c" stroke="#57965c" stroke-width="0.35">I</text><path d="M1139.2,117.4 L1149.2,127.4 M1149.2,117.4 L1139.2,127.4" stroke="#868a91" stroke-width="1.4" fill="none" stroke-linecap="round" stroke-linejoin="round" /><path d="M1689,117.4 L1699,127.4 M1699,117.4 L1689,127.4" stroke="#868a91" stroke-width="1.4" fill="none" stroke-linecap="round" stroke-linejoin="round" /><path d="M1759.25,118.6 L1766,126.0 L1772.75,118.6" stroke="#ced0d6" stroke-width="1.8" fill="none" stroke-linecap="round" stroke-linejoin="round" /><circle cx="1805.2" cy="114.4" r="1.8" stroke="none" stroke-width="0" fill="#ced0d6"/><circle cx="1805.2" cy="122.2" r="1.8" stroke="none" stroke-width="0" fill="#ced0d6"/><circle cx="1805.2" cy="130.1" r="1.8" stroke="none" stroke-width="0" fill="#ced0d6"/><path d="M1735.8999999999999,166.29999999999998 L1742.9,178.7 H1728.8999999999999 Z" stroke="#d2a951" stroke-width="4.2" fill="#d2a951" stroke-linecap="round" stroke-linejoin="round" /><path d="M1735.8999999999999,169.39999999999998 V174.79999999999998" stroke="#1e1f22" stroke-width="2.4" fill="none" stroke-linecap="round" stroke-linejoin="round" /><circle cx="1735.8999999999999" cy="177.89999999999998" r="1.35" stroke="none" stroke-width="0" fill="#1e1f22"/><path d="M1778.25,176.6 L1784,170.6 L1789.75,176.6" stroke="#b4b8bf" stroke-width="1.6" fill="none" stroke-linecap="round" stroke-linejoin="round" /><path d="M1810.05,170.6 L1815.8,176.6 L1821.55,170.6" stroke="#b4b8bf" stroke-width="1.6" fill="none" stroke-linecap="round" stroke-linejoin="round" /><circle cx="179.0" cy="905.1" r="9.85" stroke="#57965c" stroke-width="1.6" fill="#253627"/><text x="179.0" y="910.2" text-anchor="middle" font-family="Liberation Mono, monospace" font-size="16" fill="#57965c" stroke="#57965c" stroke-width="0.35">I</text><path d="M104.8,915 Q110,907.8 116,907.8 Q122,907.8 127.2,915 Q122,922.2 116,922.2 Q110,922.2 104.8,915 Z" stroke="#ced0d6" stroke-width="1.85" fill="none" stroke-linecap="round" stroke-linejoin="round" /><circle cx="116" cy="915" r="3.1" stroke="#ced0d6" stroke-width="1.85" fill="none"/><path d="M130.6,922.8 V929 H124.4 Z" fill="#ced0d6"/><path d="M112.30000000000001,968.4000000000001 L118.5,974.2 L112.30000000000001,980.0" stroke="#b4b8bf" stroke-width="1.6" fill="none" stroke-linecap="round" stroke-linejoin="round" /><path d="M207.9,934.0 L215.1,946.6999999999999 H200.7 Z" stroke="#d2a951" stroke-width="4.2" fill="#d2a951" stroke-linecap="round" stroke-linejoin="round" /><path d="M207.9,937.1 V942.5" stroke="#43454a" stroke-width="2.4" fill="none" stroke-linecap="round" stroke-linejoin="round" /><circle cx="207.9" cy="945.6" r="1.35" stroke="none" stroke-width="0" fill="#43454a"/><path d="M207.9,970.1 L215.1,982.8 H200.7 Z" stroke="#d2a951" stroke-width="4.2" fill="#d2a951" stroke-linecap="round" stroke-linejoin="round" /><path d="M207.9,973.2 V978.6" stroke="#2b2d30" stroke-width="2.4" fill="none" stroke-linecap="round" stroke-linejoin="round" /><circle cx="207.9" cy="981.7" r="1.35" stroke="none" stroke-width="0" fill="#2b2d30"/><rect x="48.2" y="1011.6" width="9.8" height="10.4" rx="2.4" stroke="#548af7" stroke-width="1.5" fill="#25324d"/><path d="M114.7,1011.5 L120.3,1017 L114.7,1022.5" stroke="#9da0a8" stroke-width="1.6" fill="none" stroke-linecap="round" stroke-linejoin="round" /><path d="M179.2,1011.5 L184.8,1017 L179.2,1022.5" stroke="#9da0a8" stroke-width="1.6" fill="none" stroke-linecap="round" stroke-linejoin="round" /><path d="M259.7,1011.5 L265.3,1017 L259.7,1022.5" stroke="#9da0a8" stroke-width="1.6" fill="none" stroke-linecap="round" stroke-linejoin="round" /><path d="M334.8,1011.5 L340.40000000000003,1017 L334.8,1022.5" stroke="#9da0a8" stroke-width="1.6" fill="none" stroke-linecap="round" stroke-linejoin="round" /><path d="M411.7,1011.5 L417.3,1017 L411.7,1022.5" stroke="#9da0a8" stroke-width="1.6" fill="none" stroke-linecap="round" stroke-linejoin="round" /><path d="M505.0,1011.5 L510.6,1017 L505.0,1022.5" stroke="#9da0a8" stroke-width="1.6" fill="none" stroke-linecap="round" stroke-linejoin="round" /><path d="M562.4000000000001,1011.5 L568.0,1017 L562.4000000000001,1022.5" stroke="#9da0a8" stroke-width="1.6" fill="none" stroke-linecap="round" stroke-linejoin="round" /><path d="M632.0,1011.5 L637.5999999999999,1017 L632.0,1022.5" stroke="#9da0a8" stroke-width="1.6" fill="none" stroke-linecap="round" stroke-linejoin="round" /><path d="M767.0,1011.5 L772.5999999999999,1017 L767.0,1022.5" stroke="#9da0a8" stroke-width="1.6" fill="none" stroke-linecap="round" stroke-linejoin="round" /><circle cx="799.9" cy="1016.7" r="9.85" stroke="#57965c" stroke-width="1.6" fill="#253627"/><text x="799.9" y="1021.8000000000001" text-anchor="middle" font-family="Liberation Mono, monospace" font-size="16" fill="#57965c" stroke="#57965c" stroke-width="0.35">I</text><path d="M1492.96,1015.26 L1492.72,1014.99 L1492.46,1014.85 L1492.17,1014.77 L1491.87,1014.73 L1491.56,1014.74 L1491.25,1014.80 L1490.93,1014.90 L1490.62,1015.04 L1490.33,1015.22 L1490.05,1015.45 L1489.80,1015.71 L1489.57,1016.00 L1489.38,1016.33 L1489.22,1016.69 L1489.11,1017.07 L1489.04,1017.47 L1489.01,1017.89 L1489.04,1018.32 L1489.12,1018.75 L1489.25,1019.18 L1489.43,1019.61 L1489.66,1020.02 L1489.95,1020.42 L1490.28,1020.79 L1490.67,1021.13 L1491.09,1021.44 L1491.56,1021.71 L1492.07,1021.94 L1492.60,1022.12 L1493.17,1022.24 L1493.75,1022.32 L1494.35,1022.33 L1494.95,1022.29 L1495.56,1022.18 L1496.17,1022.02 L1496.76,1021.79 L1497.33,1021.51 L1497.87,1021.16 L1498.39,1020.76 L1498.86,1020.30 L1499.29,1019.80 L1499.66,1019.24 L1499.98,1018.65 L1500.24,1018.02 L1500.43,1017.36 L1500.55,1016.68 L1500.60,1015.98 L1500.58,1015.27 L1500.48,1014.55 L1500.30,1013.84 L1500.04,1013.14 L1499.71,1012.46 L1499.31,1011.80 L1498.83,1011.17 L1498.28,1010.59 L1497.66,1010.04 L1496.99,1009.55 L1496.25,1009.11 L1495.46,1008.73 L1494.62,1008.41 L1493.74,1008.17 L1492.82,1008.00 L1491.87,1007.90 L1490.89,1007.88 L1489.89,1007.95 L1488.87,1008.10 L1487.84,1008.33 L1486.80,1008.66 L1485.76,1009.08 L1484.72,1009.60 M1493.44,1018.34 L1493.68,1018.61 L1493.94,1018.75 L1494.23,1018.83 L1494.53,1018.87 L1494.84,1018.86 L1495.15,1018.80 L1495.47,1018.70 L1495.78,1018.56 L1496.07,1018.38 L1496.35,1018.15 L1496.60,1017.89 L1496.83,1017.60 L1497.02,1017.27 L1497.18,1016.91 L1497.29,1016.53 L1497.36,1016.13 L1497.39,1015.71 L1497.36,1015.28 L1497.28,1014.85 L1497.15,1014.42 L1496.97,1013.99 L1496.74,1013.58 L1496.45,1013.18 L1496.12,1012.81 L1495.73,1012.47 L1495.31,1012.16 L1494.84,1011.89 L1494.33,1011.66 L1493.80,1011.48 L1493.23,1011.36 L1492.65,1011.28 L1492.05,1011.27 L1491.45,1011.31 L1490.84,1011.42 L1490.23,1011.58 L1489.64,1011.81 L1489.07,1012.09 L1488.53,1012.44 L1488.01,1012.84 L1487.54,1013.30 L1487.11,1013.80 L1486.74,1014.36 L1486.42,1014.95 L1486.16,1015.58 L1485.97,1016.24 L1485.85,1016.92 L1485.80,1017.62 L1485.82,1018.33 L1485.92,1019.05 L1486.10,1019.76 L1486.36,1020.46 L1486.69,1021.14 L1487.09,1021.80 L1487.57,1022.43 L1488.12,1023.01 L1488.74,1023.56 L1489.41,1024.05 L1490.15,1024.49 L1490.94,1024.87 L1491.78,1025.19 L1492.66,1025.43 L1493.58,1025.60 L1494.53,1025.70 L1495.51,1025.72 L1496.51,1025.65 L1497.53,1025.50 L1498.56,1025.27 L1499.60,1024.94 L1500.64,1024.52 L1501.68,1024.00" stroke="#ced0d6" stroke-width="1.5" fill="none" stroke-linecap="round" stroke-linejoin="round" /><path d="M1483.6,1026.2 L1502.6,1007.8" stroke="#2b2d30" stroke-width="4.2" fill="none" stroke-linecap="round" stroke-linejoin="round" /><path d="M1483.6,1026.2 L1502.6,1007.8" stroke="#ced0d6" stroke-width="1.5" fill="none" stroke-linecap="round" stroke-linejoin="round" /><rect x="1684.98" y="1014.6099999999999" width="22.04" height="13.07" rx="7.98" ry="6.38" fill="#ced0d6"/><path d="M1689.31,1016.66 h13.38 v4.94 q0,3.34 -6.69,3.34 q-6.69,0 -6.69,-3.34 Z" fill="#2b2d30"/><rect x="1687.87" y="1008.4499999999999" width="8.06" height="7.83" rx="3.34" fill="#2b2d30" stroke="#ced0d6" stroke-width="1.75"/><rect x="1696.08" y="1008.4499999999999" width="8.06" height="7.83" rx="3.34" fill="#2b2d30" stroke="#ced0d6" stroke-width="1.75"/><rect x="1692.5" y="1019.78" width="1.75" height="3.5" rx="0.61" fill="#ced0d6"/><rect x="1697.75" y="1019.78" width="1.75" height="3.5" rx="0.61" fill="#ced0d6"/><rect x="1849" y="1015.6" width="15.2" height="10" rx="2.2" stroke="#ced0d6" stroke-width="1.7" fill="none"/><path d="M1856.6,1019.4 V1022" stroke="#ced0d6" stroke-width="1.8" fill="none" stroke-linecap="round" stroke-linejoin="round" /><path d="M1859.6,1015.4 V1012.6 A4,4 0 0 1 1867.4,1012 V1013.6" stroke="#ced0d6" stroke-width="1.7" fill="none" stroke-linecap="round" stroke-linejoin="round" /></svg>
<span class="t" style='left:196.85px;top:45.50px;font:400 20.5px/30px "Liberation Sans", sans-serif;color:#dfe1e5;letter-spacing:0.174px;'>dev</span>
<span class="t" style='left:283.61px;top:45.50px;font:400 20.5px/30px "Liberation Sans", sans-serif;color:#dfe1e5;letter-spacing:0.240px;'>Version control</span>
<span class="t" style='left:1125.00px;top:45.50px;font:400 20.5px/30px "Liberation Sans", sans-serif;color:#dfe1e5;letter-spacing:-0.042px;'>Current File</span>
<span class="t" style='left:167.60px;top:46.50px;font:400 17.5px/30px "Liberation Sans", sans-serif;color:#ffffff;transform:scaleX(.76);transform-origin:0 0;'>D</span>
<span class="t" style='left:105.25px;top:106.75px;font:400 20.5px/30px "Liberation Sans", sans-serif;color:#dfe1e5;letter-spacing:1.274px;-webkit-text-stroke:0.55px #dfe1e5;'>Project</span>
<span class="t" style='left:193.00px;top:157.20px;font:400 20.5px/30px "Liberation Sans", sans-serif;color:#dfe1e5;letter-spacing:-0.044px;'>.idea</span>
<span class="t" style='left:193.00px;top:193.20px;font:400 20.5px/30px "Liberation Sans", sans-serif;color:#dfe1e5;letter-spacing:0.531px;'>.mvn</span>
<span class="t" style='left:194.00px;top:229.20px;font:400 20.5px/30px "Liberation Sans", sans-serif;color:#dfe1e5;letter-spacing:0.339px;'>src</span>
<span class="t" style='left:222.25px;top:265.20px;font:400 20.5px/30px "Liberation Sans", sans-serif;color:#dfe1e5;letter-spacing:0.361px;'>main</span>
<span class="t" style='left:251.81px;top:301.20px;font:400 20.5px/30px "Liberation Sans", sans-serif;color:#dfe1e5;letter-spacing:-0.264px;'>java</span>
<span class="t" style='left:279.80px;top:337.20px;font:400 20.5px/30px "Liberation Sans", sans-serif;color:#dfe1e5;letter-spacing:0.096px;'>com.solver.sn.dev</span>
<span class="t" style='left:307.85px;top:373.20px;font:400 20.5px/30px "Liberation Sans", sans-serif;color:#dfe1e5;letter-spacing:0.227px;'>Controller</span>
<span class="t" style='left:336.60px;top:409.20px;font:400 20.5px/30px "Liberation Sans", sans-serif;color:#dfe1e5;letter-spacing:0.099px;'>UserController</span>
<span class="t" style='left:307.00px;top:445.20px;font:400 20.5px/30px "Liberation Sans", sans-serif;color:#dfe1e5;letter-spacing:0.684px;'>Model</span>
<span class="t" style='left:336.60px;top:481.20px;font:400 20.5px/30px "Liberation Sans", sans-serif;color:#dfe1e5;letter-spacing:-0.374px;'>User</span>
<span class="t" style='left:307.00px;top:517.20px;font:400 20.5px/30px "Liberation Sans", sans-serif;color:#dfe1e5;letter-spacing:0.162px;'>Repository</span>
<span class="t" style='left:336.60px;top:553.20px;font:400 20.5px/30px "Liberation Sans", sans-serif;color:#dfe1e5;letter-spacing:-0.047px;'>UserRepository</span>
<span class="t" style='left:307.62px;top:589.20px;font:400 20.5px/30px "Liberation Sans", sans-serif;color:#dfe1e5;letter-spacing:0.070px;'>Service</span>
<span class="t" style='left:336.60px;top:625.20px;font:400 20.5px/30px "Liberation Sans", sans-serif;color:#dfe1e5;letter-spacing:-0.061px;'>UserService</span>
<span class="t" style='left:307.00px;top:661.20px;font:400 20.5px/30px "Liberation Sans", sans-serif;color:#dfe1e5;letter-spacing:0.406px;'>DevApplication</span>
<span class="t" style='left:250.10px;top:697.20px;font:400 20.5px/30px "Liberation Sans", sans-serif;color:#dfe1e5;letter-spacing:0.137px;'>resources</span>
<span class="t" style='left:279.94px;top:733.20px;font:400 20.5px/30px "Liberation Sans", sans-serif;color:#dfe1e5;letter-spacing:0.641px;'>static</span>
<span class="t" style='left:307.75px;top:769.20px;font:400 20.5px/30px "Liberation Sans", sans-serif;color:#dfe1e5;letter-spacing:0.350px;'>css</span>
<span class="t" style='left:307.25px;top:805.20px;font:400 20.5px/30px "Liberation Sans", sans-serif;color:#dfe1e5;letter-spacing:0.174px;clip-path:inset(0 0 10.20px 0);'>images</span>
<span class="t" style='left:786.10px;top:106.75px;font:400 20.5px/30px "Liberation Sans", sans-serif;color:#bcbfc6;letter-spacing:-0.035px;'>User.java</span>
<span class="t" style='left:966.10px;top:106.75px;font:400 20.5px/30px "Liberation Sans", sans-serif;color:#dfe1e5;letter-spacing:-0.118px;'>UserService.java</span>
<span class="t" style='left:1215.60px;top:106.75px;font:400 20.5px/30px "Liberation Sans", sans-serif;color:#bcbfc6;letter-spacing:0.075px;'>UserController.java</span>
<span class="t" style='left:1486.60px;top:106.75px;font:400 20.5px/30px "Liberation Sans", sans-serif;color:#dfe1e5;letter-spacing:0.037px;'>UserRepository.java</span>
<span class="t" style='left:809.00px;top:155.00px;font:400 20px/30px "DejaVu Sans Mono", "Liberation Mono", monospace;color:#cf8e6d;letter-spacing:-0.041px;'>package</span>
<span class="t" style='left:905.00px;top:155.00px;font:400 20px/30px "DejaVu Sans Mono", "Liberation Mono", monospace;color:#bcbec4;letter-spacing:-0.041px;'>com.solver.sn.dev.Repository;</span>
<span class="t" style='left:809.00px;top:221.00px;font:400 20px/30px "DejaVu Sans Mono", "Liberation Mono", monospace;color:#cf8e6d;letter-spacing:-0.041px;'>import</span>
<span class="t" style='left:893.00px;top:221.00px;font:400 20px/30px "DejaVu Sans Mono", "Liberation Mono", monospace;color:#bcbec4;letter-spacing:-0.041px;'>com.solver.sn.dev.Model.User;</span>
<span class="t" style='left:809.00px;top:254.00px;font:400 20px/30px "DejaVu Sans Mono", "Liberation Mono", monospace;color:#cf8e6d;letter-spacing:-0.041px;'>import</span>
<span class="t" style='left:893.00px;top:254.00px;font:400 20px/30px "DejaVu Sans Mono", "Liberation Mono", monospace;color:#bcbec4;letter-spacing:-0.041px;'>org.springframework.data.jpa.repository.JpaRepository;</span>
<span class="t" style='left:809.00px;top:287.00px;font:400 20px/30px "DejaVu Sans Mono", "Liberation Mono", monospace;color:#cf8e6d;letter-spacing:-0.041px;'>import</span>
<span class="t" style='left:893.00px;top:287.00px;font:400 20px/30px "DejaVu Sans Mono", "Liberation Mono", monospace;color:#bcbec4;letter-spacing:-0.041px;'>org.springframework.stereotype.</span>
<span class="t" style='left:1265.00px;top:287.00px;font:400 20px/30px "DejaVu Sans Mono", "Liberation Mono", monospace;color:#b3ae60;letter-spacing:-0.041px;'>Repository</span>
<span class="t" style='left:1385.00px;top:287.00px;font:400 20px/30px "DejaVu Sans Mono", "Liberation Mono", monospace;color:#bcbec4;letter-spacing:-0.041px;'>;</span>
<span class="t" style='left:809.00px;top:353.00px;font:400 20px/30px "DejaVu Sans Mono", "Liberation Mono", monospace;color:#b3ae60;letter-spacing:-0.041px;'>@Repository</span>
<span class="t" style='left:809.00px;top:386.00px;font:400 20px/30px "DejaVu Sans Mono", "Liberation Mono", monospace;color:#cf8e6d;letter-spacing:-0.041px;'>public interface</span>
<span class="t" style='left:1013.00px;top:386.00px;font:400 20px/30px "DejaVu Sans Mono", "Liberation Mono", monospace;color:#6f737a;letter-spacing:-0.041px;'>UserRepository</span>
<span class="t" style='left:1193.00px;top:386.00px;font:400 20px/30px "DejaVu Sans Mono", "Liberation Mono", monospace;color:#cf8e6d;letter-spacing:-0.041px;'>extends</span>
<span class="t" style='left:1289.00px;top:386.00px;font:400 20px/30px "DejaVu Sans Mono", "Liberation Mono", monospace;color:#bcbec4;letter-spacing:-0.041px;'>JpaRepository&lt;User, Long&gt; {</span>
<span class="t" style='left:857.00px;top:419.00px;font:400 20px/30px "DejaVu Sans Mono", "Liberation Mono", monospace;color:#bcbec4;letter-spacing:-0.041px;'>User</span>
<span class="t" style='left:917.00px;top:419.00px;font:400 20px/30px "DejaVu Sans Mono", "Liberation Mono", monospace;color:#6f737a;letter-spacing:-0.041px;'>findByEmail</span>
<span class="t" style='left:1049.00px;top:419.00px;font:400 20px/30px "DejaVu Sans Mono", "Liberation Mono", monospace;color:#bcbec4;letter-spacing:-0.041px;'>(String email);</span>
<span class="t" style='left:809.00px;top:452.00px;font:400 20px/30px "DejaVu Sans Mono", "Liberation Mono", monospace;color:#bcbec4;letter-spacing:-0.041px;'>}</span>
<span class="t" style='left:960.15px;top:353.20px;font:400 18px/30px "Liberation Sans", sans-serif;color:#868a91;letter-spacing:0.523px;'>no usages</span>
<span class="t" style='left:1248.15px;top:419.20px;font:400 18px/30px "Liberation Sans", sans-serif;color:#868a91;letter-spacing:0.523px;'>no usages</span>
<span class="t" style='left:740.30px;top:156.00px;font:400 18px/30px "DejaVu Sans Mono", "Liberation Mono", monospace;color:#4b5059;letter-spacing:0.763px;'>1</span>
<span class="t" style='left:740.30px;top:189.00px;font:400 18px/30px "DejaVu Sans Mono", "Liberation Mono", monospace;color:#4b5059;letter-spacing:0.763px;'>2</span>
<span class="t" style='left:740.30px;top:222.00px;font:400 18px/30px "DejaVu Sans Mono", "Liberation Mono", monospace;color:#4b5059;letter-spacing:0.763px;'>3</span>
<span class="t" style='left:740.30px;top:255.00px;font:400 18px/30px "DejaVu Sans Mono", "Liberation Mono", monospace;color:#4b5059;letter-spacing:0.763px;'>4</span>
<span class="t" style='left:740.30px;top:288.00px;font:400 18px/30px "DejaVu Sans Mono", "Liberation Mono", monospace;color:#4b5059;letter-spacing:0.763px;'>5</span>
<span class="t" style='left:740.30px;top:321.00px;font:400 18px/30px "DejaVu Sans Mono", "Liberation Mono", monospace;color:#4b5059;letter-spacing:0.763px;'>6</span>
<span class="t" style='left:740.30px;top:354.00px;font:400 18px/30px "DejaVu Sans Mono", "Liberation Mono", monospace;color:#4b5059;letter-spacing:0.763px;'>7</span>
<span class="t" style='left:740.30px;top:387.00px;font:400 18px/30px "DejaVu Sans Mono", "Liberation Mono", monospace;color:#a1a3ab;letter-spacing:0.763px;'>8</span>
<span class="t" style='left:740.30px;top:420.00px;font:400 18px/30px "DejaVu Sans Mono", "Liberation Mono", monospace;color:#4b5059;letter-spacing:0.763px;'>9</span>
<span class="t" style='left:728.70px;top:453.00px;font:400 18px/30px "DejaVu Sans Mono", "Liberation Mono", monospace;color:#4b5059;letter-spacing:0.763px;'>10</span>
<span class="t" style='left:728.70px;top:486.00px;font:400 18px/30px "DejaVu Sans Mono", "Liberation Mono", monospace;color:#4b5059;letter-spacing:0.763px;'>11</span>
<span class="t" style='left:1750.00px;top:157.80px;font:400 20.5px/30px "Liberation Sans", sans-serif;color:#b4b8bf;'>2</span>
<span class="t" style='left:105.25px;top:842.00px;font:400 20.5px/30px "Liberation Sans", sans-serif;color:#dfe1e5;letter-spacing:1.101px;-webkit-text-stroke:0.55px #dfe1e5;'>Problems</span>
<span class="t" style='left:243.97px;top:842.00px;font:400 20.5px/30px "Liberation Sans", sans-serif;color:#dfe1e5;letter-spacing:0.131px;'>File</span>
<span class="t" style='left:289.00px;top:842.00px;font:400 20.5px/30px "Liberation Sans", sans-serif;color:#868a91;'>2</span>
<span class="t" style='left:342.00px;top:842.00px;font:400 20.5px/30px "Liberation Sans", sans-serif;color:#dfe1e5;letter-spacing:0.050px;'>Project Errors</span>
<span class="t" style='left:505.17px;top:842.00px;font:400 20.5px/30px "Liberation Sans", sans-serif;color:#dfe1e5;letter-spacing:0.083px;'>Server-Side Analysis</span>
<span class="t" style='left:731.12px;top:842.00px;font:400 20.5px/30px "Liberation Sans", sans-serif;color:#dfe1e5;letter-spacing:-0.077px;'>Vulnerable Dependencies</span>
<span class="t" style='left:195.12px;top:889.50px;font:400 20.5px/30px "Liberation Sans", sans-serif;color:#dfe1e5;letter-spacing:0.061px;'>UserRepository.java</span>
<span class="t" style='left:389.85px;top:889.50px;font:400 20.5px/30px "Liberation Sans", sans-serif;color:#868a91;letter-spacing:0.274px;'>C:\soumaDev\dev\src\main\java\com\solver\sn\dev\Repository</span>
<span class="t" style='left:979.80px;top:889.50px;font:400 20.5px/30px "Liberation Sans", sans-serif;color:#868a91;letter-spacing:0.205px;'>2 problems</span>
<span class="t" style='left:223.00px;top:925.50px;font:400 20.5px/30px "Liberation Sans", sans-serif;color:#dfe1e5;letter-spacing:-0.020px;'>Interface &#x27;UserRepository&#x27; is never used</span>
<span class="t" style='left:588.00px;top:925.50px;font:400 20.5px/30px "Liberation Sans", sans-serif;color:#6f737a;letter-spacing:0.409px;'>:8</span>
<span class="t" style='left:223.47px;top:961.75px;font:400 20.5px/30px "Liberation Sans", sans-serif;color:#dfe1e5;letter-spacing:0.031px;'>Method &#x27;findByEmail(java.lang.String)&#x27; is never used</span>
<span class="t" style='left:701.00px;top:961.75px;font:400 20.5px/30px "Liberation Sans", sans-serif;color:#6f737a;letter-spacing:0.574px;'>:9</span>
<span class="t" style='left:64.85px;top:1001.00px;font:400 20.5px/30px "Liberation Sans", sans-serif;color:#a6a9b0;letter-spacing:0.174px;'>dev</span>
<span class="t" style='left:135.85px;top:1001.00px;font:400 20.5px/30px "Liberation Sans", sans-serif;color:#a6a9b0;letter-spacing:0.154px;'>src</span>
<span class="t" style='left:199.29px;top:1001.00px;font:400 20.5px/30px "Liberation Sans", sans-serif;color:#a6a9b0;letter-spacing:0.348px;'>main</span>
<span class="t" style='left:281.63px;top:1001.00px;font:400 20.5px/30px "Liberation Sans", sans-serif;color:#a6a9b0;letter-spacing:-0.449px;'>java</span>
<span class="t" style='left:355.75px;top:1001.00px;font:400 20.5px/30px "Liberation Sans", sans-serif;color:#a6a9b0;letter-spacing:0.797px;'>com</span>
<span class="t" style='left:432.63px;top:1001.00px;font:400 20.5px/30px "Liberation Sans", sans-serif;color:#a6a9b0;letter-spacing:0.323px;'>solver</span>
<span class="t" style='left:525.73px;top:1001.00px;font:400 20.5px/30px "Liberation Sans", sans-serif;color:#a6a9b0;letter-spacing:0.720px;'>sn</span>
<span class="t" style='left:582.00px;top:1001.00px;font:400 20.5px/30px "Liberation Sans", sans-serif;color:#a6a9b0;letter-spacing:0.791px;'>dev</span>
<span class="t" style='left:651.60px;top:1001.00px;font:400 20.5px/30px "Liberation Sans", sans-serif;color:#a6a9b0;letter-spacing:0.225px;'>Repository</span>
<span class="t" style='left:817.26px;top:1001.00px;font:400 20.5px/30px "Liberation Sans", sans-serif;color:#a6a9b0;letter-spacing:0.006px;'>UserRepository</span>
<span class="t" style='left:1416.71px;top:1001.00px;font:400 20.5px/30px "Liberation Sans", sans-serif;color:#a6a9b0;letter-spacing:0.517px;'>8:59</span>
<span class="t" style='left:1528.33px;top:1001.00px;font:400 20.5px/30px "Liberation Sans", sans-serif;color:#a6a9b0;letter-spacing:-1.497px;'>CRLF</span>
<span class="t" style='left:1599.60px;top:1001.00px;font:400 20.5px/30px "Liberation Sans", sans-serif;color:#a6a9b0;letter-spacing:0.581px;'>UTF-8</span>
<span class="t" style='left:1738.24px;top:1001.00px;font:400 20.5px/30px "Liberation Sans", sans-serif;color:#a6a9b0;letter-spacing:0.109px;'>4 spaces</span>
</div></body></html>
